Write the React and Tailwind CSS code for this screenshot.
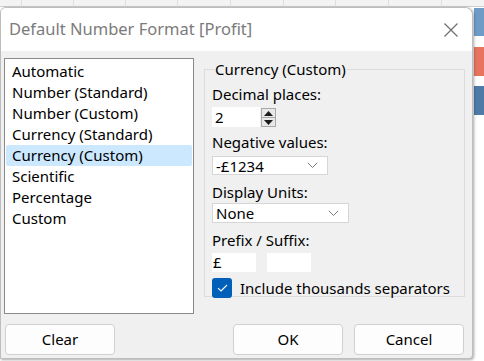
import React from "react";

const font = { fontFamily: '"Noto Sans", "Open Sans", sans-serif' };

function Chevron() {
  return (
    <svg width="11" height="7" viewBox="0 0 11 7" className="shrink-0">
      <path d="M0.8 0.8 L5.5 5.5 L10.2 0.8" fill="none" stroke="#7a7a7a" strokeWidth="1" />
    </svg>
  );
}

function Select({ value, width }) {
  return (
    <div className={`flex items-center justify-between bg-white border border-[#d6d6d6] pl-[3px] pr-[9px] ${width}`}>
      <span className="text-[15px] leading-[18px] text-black">{value}</span>
      <Chevron />
    </div>
  );
}

export default function App() {
  const items = [
    "Automatic",
    "Number (Standard)",
    "Number (Custom)",
    "Currency (Standard)",
    "Currency (Custom)",
    "Scientific",
    "Percentage",
    "Custom",
  ];
  const gridLines = [21, 73, 125, 177, 230, 283, 335, 388, 441];
  return (
    <div className="relative w-[484px] h-[361px] overflow-hidden bg-white" style={font}>
      {/* background spreadsheet */}
      <div className="absolute left-0 top-0 w-[484px] h-[7px] bg-[#f3f3f3] border-b border-[#cfcfcf]">
        {gridLines.map((x) => (
          <div key={x} className="absolute top-0 h-[7px] w-px bg-[#dedede]" style={{ left: x }} />
        ))}
      </div>
      <div className="absolute left-[474px] top-[8px] w-[10px] h-[28px] bg-[#6e9cc7]" />
      <div className="absolute left-[474px] top-[47px] w-[10px] h-[29px] bg-[#e8745f]" />
      <div className="absolute left-[474px] top-[86px] w-[10px] h-[29px] bg-[#4e7aa8]" />

      {/* dialog window */}
      <div className="absolute left-0 top-[7px] w-[473px] h-[352px] flex flex-col bg-[#f0f0f0] rounded-tr-[8px] rounded-tl-[6px] rounded-br-[4px] border border-[#bdbdbd] shadow-[1px_1px_3px_rgba(0,0,0,0.35)] overflow-hidden">
        {/* title bar */}
        <div className="h-[43px] shrink-0 bg-white flex items-center justify-between pl-[8px] pr-[14px]">
          <span className="text-[16.5px] text-[#7b7b7b]">Default Number Format [Profit]</span>
          <svg width="14" height="14" viewBox="0 0 14 14">
            <path d="M0.5 0.5 L13.5 13.5 M13.5 0.5 L0.5 13.5" stroke="#6e6e6e" strokeWidth="1.2" />
          </svg>
        </div>

        {/* body */}
        <div className="flex h-[263px] shrink-0 pl-[3px] pr-[7px] pt-[7px]">
          <div className="w-[190px] h-[256px] shrink-0 bg-white border border-[#8a8a8a] pt-[2px] px-[1px]">
            {items.map((it) => (
              <div
                key={it}
                className={`h-[21px] leading-[21px] pl-[6px] text-[15px] text-black rounded-[2px] ${
                  it === "Currency (Custom)" ? "bg-[#cce8ff]" : ""
                }`}
              >
                {it}
              </div>
            ))}
          </div>

          <fieldset className="ml-[10px] mt-[1px] w-[262px] h-[238px] border border-[#dcdcdc] px-[7px] pb-0">
            <legend className="ml-[2px] px-[1px] text-[15px] leading-[20px] text-black">Currency (Custom)</legend>
            <div className="flex flex-col mt-[5px]">
              <div className="text-[15px] leading-[20px] text-black">Decimal places:</div>
              <div className="mt-[3px] flex items-start">
                <div className="w-[48px] h-[20px] bg-white pl-[3px] text-[15px] leading-[20px] text-black">2</div>
                <div className="ml-[1px] w-[15px] h-[19px] mt-[1px] flex flex-col border border-[#a9a9a9] bg-[#e8e8e8]">
                  <div className="flex-1 flex items-center justify-center border-b border-[#a9a9a9]">
                    <svg width="9" height="5" viewBox="0 0 9 5"><path d="M0 5 L4.5 0 L9 5 Z" fill="#1a1a1a" /></svg>
                  </div>
                  <div className="flex-1 flex items-center justify-center">
                    <svg width="9" height="5" viewBox="0 0 9 5"><path d="M0 0 L4.5 5 L9 0 Z" fill="#1a1a1a" /></svg>
                  </div>
                </div>
              </div>

              <div className="mt-[5px] text-[15px] leading-[20px] text-black">Negative values:</div>
              <div className="mt-[4px]">
                <Select value="-£1234" width="w-[116px] h-[19px]" />
              </div>

              <div className="mt-[7px] text-[15px] leading-[20px] text-black">Display Units:</div>
              <div className="mt-[1px]">
                <Select value="None" width="w-[137px] h-[20px]" />
              </div>

              <div className="mt-[7px] text-[15px] leading-[20px] text-black">Prefix / Suffix:</div>
              <div className="mt-[3px] flex gap-[11px]">
                <div className="w-[44px] h-[19px] bg-white pl-[1px] text-[15px] leading-[19px] text-black">£</div>
                <div className="w-[44px] h-[19px] bg-white" />
              </div>

              <div className="mt-[6px] flex items-center">
                <div className="w-[20px] h-[20px] rounded-[3px] bg-[#005fb8] flex items-center justify-center">
                  <svg width="11" height="8" viewBox="0 0 11 8">
                    <path d="M1 4.2 L4 7 L10 1" fill="none" stroke="white" strokeWidth="1.1" />
                  </svg>
                </div>
                <span className="ml-[8px] text-[15px] leading-[20px] text-black">Include thousands separators</span>
              </div>
            </div>
          </fieldset>
        </div>

        {/* buttons */}
        <div className="flex-1 flex items-start pl-[4px] pr-[8px] pt-[10px]">
          <button className="w-[110px] h-[31px] bg-[#fdfdfd] border border-[#d0d0d0] rounded-[4px] text-[15px] text-black">Clear</button>
          <div className="flex-1" />
          <button className="w-[110px] h-[31px] bg-[#fdfdfd] border border-[#d0d0d0] rounded-[4px] text-[15px] text-black">OK</button>
          <button className="ml-[11px] w-[110px] h-[31px] bg-[#fdfdfd] border border-[#d0d0d0] rounded-[4px] text-[15px] text-black">Cancel</button>
        </div>
      </div>
    </div>
  );
}
